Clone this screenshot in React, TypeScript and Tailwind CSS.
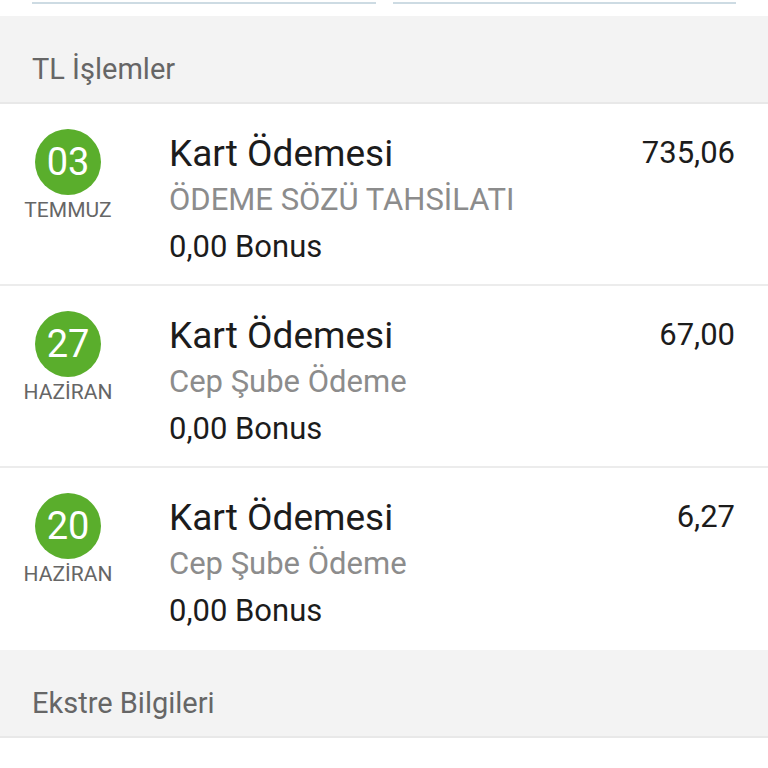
import React from 'react';

type Txn = {
  day: string;
  month: string;
  title: string;
  desc: string;
  amount: string;
  bonus: string;
};

const txns: Txn[] = [
  { day: '03', month: 'TEMMUZ', title: 'Kart Ödemesi', desc: 'ÖDEME SÖZÜ TAHSİLATI', amount: '735,06', bonus: '0,00 Bonus' },
  { day: '27', month: 'HAZİRAN', title: 'Kart Ödemesi', desc: 'Cep Şube Ödeme', amount: '67,00', bonus: '0,00 Bonus' },
  { day: '20', month: 'HAZİRAN', title: 'Kart Ödemesi', desc: 'Cep Şube Ödeme', amount: '6,27', bonus: '0,00 Bonus' },
];

const SectionHeader: React.FC<{ title: string }> = ({ title }) => (
  <div className="h-[88px] bg-[#f3f3f3] border-b-2 border-[#e8e8e8] pl-[32px] pt-[37px]">
    <div className="text-[29px] leading-[32px] text-[#666666]">{title}</div>
  </div>
);

const TxnRow: React.FC<{ t: Txn; last: boolean }> = ({ t, last }) => (
  <div className={`flex h-[182px] pl-[24px] pr-[33px] pt-[24px] bg-white ${last ? '' : 'border-b-2 border-[#ececec]'}`}>
    <div className="w-[88px] flex flex-col items-center">
      <div className="mt-[1px] w-[66px] h-[66px] rounded-full bg-[#5aae2c] flex items-center justify-center text-white text-[38px] leading-none">
        {t.day}
      </div>
      <div className="mt-[1px] text-[21px] leading-[28px] text-[#666666]">{t.month}</div>
    </div>
    <div className="flex-1 ml-[57px] mt-[2px]">
      <div className="flex justify-between items-center h-[47px]">
        <span className="text-[37px] text-[#1c1c1c]">{t.title}</span>
        <span className="text-[31px] text-[#1c1c1c]">{t.amount}</span>
      </div>
      <div className="h-[47px] flex items-center text-[31px] text-[#8c8c8c]">{t.desc}</div>
      <div className="h-[47px] flex items-center text-[31px] text-[#1c1c1c]">{t.bonus}</div>
    </div>
  </div>
);

export default function App() {
  return (
    <div className="w-[768px] h-[768px] overflow-hidden bg-white" style={{ fontFamily: 'Roboto, "Noto Sans", sans-serif' }}>
      <div className="h-[16px] flex gap-[17px] px-[32px] pt-[2px]">
        <div className="flex-1 h-[2px] bg-[#cddbe3]" />
        <div className="flex-1 h-[2px] bg-[#cddbe3]" />
      </div>
      <SectionHeader title="TL İşlemler" />
      {txns.map((t, i) => (
        <TxnRow key={i} t={t} last={i === txns.length - 1} />
      ))}
      <SectionHeader title="Ekstre Bilgileri" />
    </div>
  );
}
